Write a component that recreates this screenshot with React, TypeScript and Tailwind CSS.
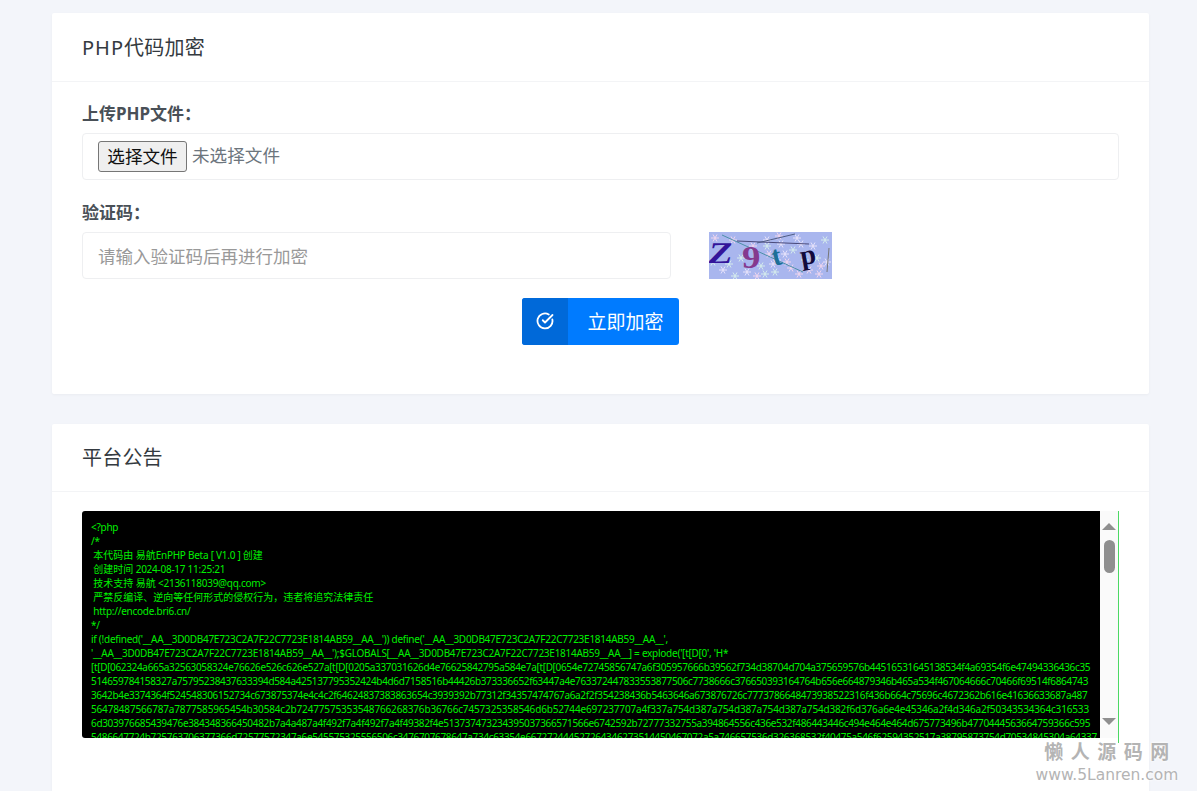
const codeLines = [
  "<?php",
  "/*",
  " 本代码由 易航EnPHP Beta [ V1.0 ] 创建",
  " 创建时间 2024-08-17 11:25:21",
  " 技术支持 易航 <2136118039@qq.com>",
  " 严禁反编译、逆向等任何形式的侵权行为，违者将追究法律责任",
  " http://encode.bri6.cn/",
  "*/",
  "if (!defined('__AA__3D0DB47E723C2A7F22C7723E1814AB59__AA__')) define('__AA__3D0DB47E723C2A7F22C7723E1814AB59__AA__',",
  "'__AA__3D0DB47E723C2A7F22C7723E1814AB59__AA__');$GLOBALS[__AA__3D0DB47E723C2A7F22C7723E1814AB59__AA__] = explode('[t[D[0', 'H*",
];

// long hex payload, each line has its own tracking so the right edge lands where it should
const hexLines = [
  { text: "[t[D[062324a665a32563058324e76626e526c626e527a[t[D[0205a337031626d4e76625842795a584e7a[t[D[0654e72745856747a6f305957666b39562f734d38704d704a375659576b44516531645138534f4a69354f6e47494336436c35", cls: "tracking-[-0.34px]" },
  { text: "514659784158327a75795238437633394d584a425137795352424b4d6d7158516b44426b373336652f63447a4e763372447833553877506c7738666c376650393164764b656e664879346b465a534f467064666c70466f69514f6864743", cls: "tracking-[-0.34px]" },
  { text: "3642b4e3374364f524548306152734c673875374e4c4c2f64624837383863654c3939392b77312f34357474767a6a2f2f354238436b5463646a673876726c7773786648473938522316f436b664c75696c4672362b616e41636633687a487", cls: "tracking-[-0.35px]" },
  { text: "56478487566787a7877585965454b30584c2b72477575353548766268376b36766c7457325358546d6b52744e697237707a4f337a754d387a754d387a754d387a754d382f6d376a6e4e45346a2f4d346a2f50343534364c316533", cls: "tracking-[-0.16px]" },
  { text: "6d303976685439476e384348366450482b7a4a487a4f492f7a4f492f7a4f49382f4e513737473234395037366571566e6742592b72777332755a394864556c436e532f486443446c494e464e464d675773496b4770444563664759366c595", cls: "tracking-[-0.34px]" },
  { text: "5486647724b725763706377366d72577572347a6e545575325556506c3476707678647a734c63354e667272444527264346273514450467072a5a746657536d326368532f40475a546f62594352517a38795873754d70534845304a64337", cls: "tracking-[-0.34px]" },
];

// latin runs are set tighter than the CJK ones, the reference font is narrower
function CodeLine({ text }: { text: string }) {
  const parts = text.split(/([\u3000-\u303f\u4e00-\u9fff\uff00-\uffef]+)/);
  return (
    <>
      {parts.map((part, i) =>
        i % 2 === 1 ? <span key={i}>{part}</span> : <span key={i} className="tracking-[-0.26px]">{part}</span>
      )}
      {"\n"}
    </>
  );
}

function Flake({ x, y, color }: { x: number; y: number; color: string }) {
  return (
    <g stroke={color} strokeWidth="1">
      <line x1={x - 4} y1={y} x2={x + 4} y2={y} />
      <line x1={x - 2} y1={y - 3.5} x2={x + 2} y2={y + 3.5} />
      <line x1={x - 2} y1={y + 3.5} x2={x + 2} y2={y - 3.5} />
    </g>
  );
}

function CaptchaImage() {
  const flakes = [
    [6, 6], [4, 30], [14, 38], [24, 8], [32, 26], [38, 40], [44, 14], [52, 34], [58, 8], [60, 22],
    [66, 40], [72, 12], [78, 30], [84, 18], [88, 6], [90, 42], [96, 28], [104, 14], [110, 42], [116, 8],
    [118, 30], [48, 44], [26, 44], [68, 28], [100, 38], [58, 14], [76, 22], [82, 36], [108, 26], [64, 32],
    [70, 4], [56, 42], [92, 12], [112, 34], [20, 32],
  ];
  return (
    <svg width="123" height="47" viewBox="0 0 123 47" className="block shrink-0">
      <rect width="123" height="47" fill="#a9b6ee" />
      {flakes.map(([x, y], i) => (
        <Flake key={i} x={x} y={y} color={i % 3 === 0 ? "#f0d6ee" : i % 3 === 1 ? "#d5ecec" : "#e8e3fb"} />
      ))}
      <line x1="13" y1="3" x2="94" y2="40" stroke="#4d8fa8" strokeWidth="1" />
      <line x1="28" y1="9" x2="100" y2="12" stroke="#4a4a7a" strokeWidth="1" />
      <line x1="48" y1="11" x2="86" y2="2" stroke="#4f5c84" strokeWidth="1" />
      <line x1="120" y1="16" x2="118" y2="40" stroke="#777" strokeWidth="1" />
      <text fontSize="30" fontWeight="700" fontFamily="Liberation Serif, serif" fill="#33149a" transform="translate(-2 31) scale(1.2 1) skewX(-8)">Z</text>
      <text fontSize="32" fontWeight="700" fontFamily="Liberation Serif, serif" fill="#853a8e" transform="translate(33 36) scale(1.15 1)">9</text>
      <text x="63" y="33" fontSize="28" fontWeight="700" fontFamily="Liberation Serif, serif" fill="#1c6f96" transform="rotate(-14 68 25)">t</text>
      <text x="92" y="32" fontSize="28" fontWeight="700" fontFamily="Liberation Serif, serif" fill="#120a3c" transform="rotate(-10 100 28)">p</text>
    </svg>
  );
}

export default function App() {
  return (
    <div className="relative h-[791px] overflow-hidden bg-[#f3f5fa] pt-[13px] pr-[48px] pl-[52px] font-['Noto_Sans','Noto_Sans_CJK_SC',sans-serif] text-[#343a40]">
      {/* encrypt form */}
      <div className="h-[381px] rounded-[2px] bg-white shadow-[0_1px_3px_rgba(0,0,0,0.04)]">
        <div className="flex h-[69px] items-center border-b border-[#f3f4f6] px-[30px] pt-[1px] text-[20px] font-normal tracking-[0.2px]">
          <span className="tracking-[1px]">PHP</span>代码加密
        </div>
        <div className="px-[30px] pt-[18px]">
          <div className="mb-[6px] h-[27px] text-[17px] leading-[27px] font-bold text-[#495057]">上传PHP文件：</div>
          <div className="flex h-[47px] items-center rounded border border-[#eeeff1] pl-[15px] text-[17.6px]">
            <div className="flex h-[31px] w-[89px] items-center justify-center rounded-[3px] border border-[#767676] bg-[#efefef] pb-[1px] text-[#111]">
              选择文件
            </div>
            <span className="ml-[5px] -translate-y-[1px] text-[#6c757d]">未选择文件</span>
          </div>
          <div className="mt-[20px] mb-[6px] h-[26px] text-[17px] leading-[26px] font-bold text-[#495057]">验证码：</div>
          <div className="flex items-center">
            <div className="flex h-[47px] w-[589px] items-center rounded border border-[#eeeff1] pt-[1px] pl-[15px] text-[17.5px] text-[#999]">
              请输入验证码后再进行加密
            </div>
            <div className="ml-[38px]">
              <CaptchaImage />
            </div>
          </div>
          <div className="mt-[19px] flex justify-center">
            <button className="flex h-[47px] w-[157px] overflow-hidden rounded-[3px] bg-[#007bff] text-white">
              <span className="flex h-full w-[46px] items-center justify-center bg-[#0069d9] pb-[2px]">
                <svg width="18" height="18" viewBox="0 0 24 24" fill="none" stroke="currentColor" strokeWidth="2.4" strokeLinecap="round" strokeLinejoin="round">
                  <path d="M21.8 10A10 10 0 1 1 17 3.3" />
                  <path d="m9 11 3 3L22 4" />
                </svg>
              </span>
              <span className="flex h-full flex-1 items-center justify-center pt-[1px] pl-[4px] text-[19px]">立即加密</span>
            </button>
          </div>
        </div>
      </div>

      {/* notice */}
      <div className="mt-[30px] h-[400px] rounded-[2px] bg-white shadow-[0_1px_3px_rgba(0,0,0,0.04)]">
        <div className="flex h-[68px] items-center border-b border-[#f3f4f6] px-[30px] pt-[1px] text-[20px] font-normal tracking-[0.2px]">
          平台公告
        </div>
        <div className="px-[30px] pt-[19px]">
          <div className="flex h-[232px] items-start border-r border-[#4cd964]">
            <pre className="h-[227px] w-[1018px] overflow-hidden rounded-l-[3px] bg-black pt-[9px] pl-[9px] font-['Noto_Sans','Noto_Sans_CJK_SC',sans-serif] text-[10px] leading-[14px] text-[#00f000]">
              {codeLines.map((line, i) => (
                <CodeLine key={i} text={line} />
              ))}
              {hexLines.map((line, i) => (
                <div key={i} className={line.cls}>{line.text}</div>
              ))}
            </pre>
            <div className="flex h-[227px] flex-1 flex-col items-center bg-[#fafafa] pt-[12px] pb-[13px]">
              <div className="h-0 w-0 border-x-[7px] border-b-[7px] border-x-transparent border-b-[#8f8f8f]" />
              <div className="mt-[10px] h-[33px] w-[11px] rounded-full bg-[#8f8f8f]" />
              <div className="mt-auto h-0 w-0 border-x-[7px] border-t-[7px] border-x-transparent border-t-[#8f8f8f]" />
            </div>
          </div>
        </div>
      </div>

      {/* site watermark */}
      <div className="absolute top-[737px] right-[20px] flex w-[140px] flex-col items-center text-[#b4b4b4] [text-shadow:0_0_3px_#fff,0_0_3px_#fff]">
        <div className="h-[27px] pl-[7px] font-['Noto_Sans_CJK_SC',sans-serif] text-[19px] leading-[27px] font-bold tracking-[7.5px] whitespace-nowrap">懒人源码网</div>
        <div className="font-['DejaVu_Sans',sans-serif] text-[15.5px] leading-[22px] whitespace-nowrap">www.5Lanren.com</div>
      </div>
    </div>
  );
}
